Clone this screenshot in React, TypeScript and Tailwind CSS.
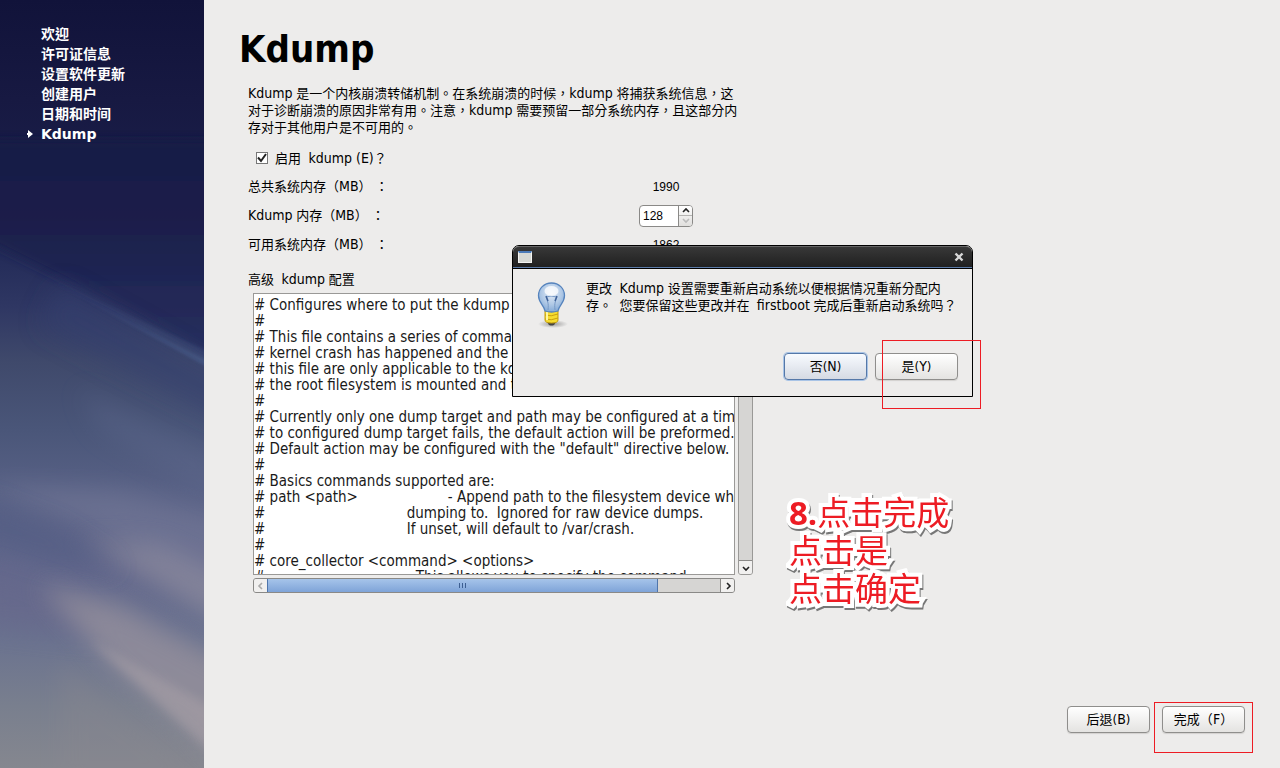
import { useState, type ReactNode } from "react";

const STEPS = ["欢迎", "许可证信息", "设置软件更新", "创建用户", "日期和时间", "Kdump"];

const CONFIG = `# Configures where to put the kdump /proc/vmcore files
#
# This file contains a series of commands to perform (in order) when a
# kernel crash has happened and the kdump kernel has been loaded.
# this file are only applicable to the kdump initramfs, and have no effect
# the root filesystem is mounted and the normal init scripts are processed
#
# Currently only one dump target and path may be configured at a time. If
# to configured dump target fails, the default action will be preformed.
# Default action may be configured with the "default" directive below.
#
# Basics commands supported are:
# path <path>                     - Append path to the filesystem device which you are
#                                 dumping to.  Ignored for raw device dumps.
#                                 If unset, will default to /var/crash.
#
# core_collector <command> <options>
#                                 - This allows you to specify the command`;

// latin runs are set one size above the chinese text
function Latin({ children }: { children: ReactNode }) {
  return <span className="text-[14px]">{children}</span>;
}

function PushButton({ children, focused }: { children: ReactNode; focused?: boolean }) {
  return (
    <button
      type="button"
      className={
        focused
          ? "h-[27px] w-[83px] rounded-[4px] border border-[#5578a8] bg-gradient-to-b from-[#f8fbff] to-[#d5dae3] shadow-[0_0_0_1px_#a9c4e6]"
          : "h-[27px] w-[83px] rounded-[4px] border border-[#8f8e8c] bg-gradient-to-b from-white to-[#e4e3e1] shadow-[0_1px_1px_#d2d1cf]"
      }
    >
      {children}
    </button>
  );
}

function Chevron({ d, stroke = "#222" }: { d: string; stroke?: string }) {
  return (
    <svg viewBox="0 0 10 10" className="h-[10px] w-[10px]" fill="none" stroke={stroke} strokeWidth="1.600">
      <path d={d} />
    </svg>
  );
}

function Sky() {
  return (
    <svg className="absolute inset-0 h-full w-full" viewBox="0 0 204 768" preserveAspectRatio="none">
      <defs>
        <linearGradient id="sky" x1="0" y1="0" x2="0" y2="1">
          <stop offset="0" stopColor="#11133a" />
          <stop offset="0.13" stopColor="#171942" />
          <stop offset="0.27" stopColor="#1b204c" />
          <stop offset="0.33" stopColor="#232b58" />
          <stop offset="0.4" stopColor="#2f3763" />
          <stop offset="0.47" stopColor="#3f496b" />
          <stop offset="0.56" stopColor="#4a5679" />
          <stop offset="0.64" stopColor="#586185" />
          <stop offset="0.74" stopColor="#63688c" />
          <stop offset="0.83" stopColor="#6a728f" />
          <stop offset="0.92" stopColor="#797f8e" />
          <stop offset="1" stopColor="#85878f" />
        </linearGradient>
        <linearGradient id="night" x1="0" y1="0" x2="0" y2="1">
          <stop offset="0" stopColor="#181a45" />
          <stop offset="0.4" stopColor="#1b1f4b" />
          <stop offset="1" stopColor="#262e60" />
        </linearGradient>
        <linearGradient id="trail" x1="0" y1="0" x2="1" y2="0">
          <stop offset="0" stopColor="#43588a" stopOpacity="0" />
          <stop offset="1" stopColor="#4c6290" stopOpacity="0.8" />
        </linearGradient>
        <filter id="soft" x="-50%" y="-50%" width="200%" height="200%">
          <feGaussianBlur stdDeviation="12" />
        </filter>
        <filter id="mid" x="-30%" y="-30%" width="160%" height="160%">
          <feGaussianBlur stdDeviation="5" />
        </filter>
        <filter id="thin" x="-20%" y="-20%" width="140%" height="140%">
          <feGaussianBlur stdDeviation="1.500" />
        </filter>
      </defs>
      <rect width="204" height="768" fill="url(#sky)" />
      <path d="M-20 140H230V370L120 308L-20 238z" fill="url(#night)" opacity="0.85" filter="url(#mid)" />
      <path d="M60 285L230 378V425L40 325z" fill="#34406e" opacity="0.6" filter="url(#soft)" />
      <path d="M30 270L210 352V369z" fill="url(#trail)" opacity="0.3" filter="url(#thin)" />
      <path d="M70 292L210 362V368z" fill="url(#trail)" opacity="0.55" filter="url(#thin)" />
      <path d="M80 390L220 458V500L100 430z" fill="#626c90" opacity="0.35" filter="url(#soft)" />
      <path d="M-20 485L100 530L240 620V520L120 490z" fill="#7d809c" opacity="0.45" filter="url(#soft)" />
      <path d="M80 540L230 628V580L160 545z" fill="#918e9f" opacity="0.6" filter="url(#soft)" />
      <path d="M-20 500L60 530L120 570L60 565L-20 540z" fill="#515c83" opacity="0.6" filter="url(#soft)" />
      <path d="M-20 565L60 590L110 640L-20 625z" fill="#66658a" opacity="0.4" filter="url(#soft)" />
      <path d="M40 585L120 605L240 670V775L110 665z" fill="#97919d" opacity="0.75" filter="url(#soft)" />
      <path d="M90 640L225 715V765z" fill="#aea5aa" opacity="0.45" filter="url(#mid)" />
      <path d="M60 660L200 765V790H60z" fill="#8a888f" opacity="0.35" filter="url(#soft)" />
    </svg>
  );
}

function Bulb() {
  return (
    <svg viewBox="0 0 32 46" className="h-[46px] w-8">
      <defs>
        <radialGradient id="glass" cx="0.5" cy="0.35" r="0.65">
          <stop offset="0" stopColor="#e2ebf6" />
          <stop offset="0.6" stopColor="#b0c9e6" />
          <stop offset="1" stopColor="#83a9d6" />
        </radialGradient>
        <radialGradient id="shade">
          <stop offset="0" stopColor="#777" stopOpacity="0.7" />
          <stop offset="1" stopColor="#777" stopOpacity="0" />
        </radialGradient>
      </defs>
      <ellipse cx="17" cy="42" rx="15" ry="4" fill="url(#shade)" />
      <path d="M11 40H20L18 43Q15.500 44 13 43z" fill="#444" />
      <path d="M9 29H22V38Q22 41 15.500 41Q9 41 9 38z" fill="#f6dc2f" stroke="#c39b0c" />
      <path d="M9 33Q15 35 22 32M9 37Q15 39 22 36" stroke="#c8a010" fill="none" />
      <path d="M11 30V38" stroke="#fff7a0" strokeWidth="2" />
      <path
        d="M15.500 1C8 1 2.500 6.500 2.500 13.500C2.500 21 8 23 9 29Q15.500 31 22 29C23 23 28.500 21 28.500 13.500C28.500 6.500 23 1 15.500 1z"
        fill="url(#glass)"
        stroke="#5583bd"
        strokeWidth="1.300"
      />
      <path d="M12 28C13 21 11 18 10 15L15 14L21 15C20 18 18 21 19 28" fill="none" stroke="#7699c6" />
      <path d="M10 14L12 19M21 14L19 19" stroke="#3f6198" strokeWidth="1.500" />
      <ellipse cx="15.500" cy="9" rx="7" ry="5" fill="#fff" opacity="0.75" />
    </svg>
  );
}

function Dialog() {
  return (
    <div
      role="dialog"
      aria-label="Kdump"
      className="absolute top-[245px] left-[512px] w-[461px] rounded-t-[7px] border border-black bg-[#edeceb]"
    >
      <div className="flex h-[22px] items-center justify-between rounded-t-[6px] border-t border-b border-t-[#666] border-b-[#5b7ba8] bg-gradient-to-b from-[#383838] to-[#202020] pr-2 pl-[5px]">
        <span className="h-3 w-[14px] border border-[#f4f4f2] border-t-2 border-t-[#4a7ab8] bg-[#d6d8d4]" />
        <button type="button" aria-label="关闭" className="flex h-4 w-[10px] items-center">
          <svg viewBox="0 0 10 10" className="h-[10px] w-[10px]" stroke="#d8d8d8" strokeWidth="2.400">
            <path d="M1.500 1.500L8.500 8.500M8.500 1.500L1.500 8.500" />
          </svg>
        </button>
      </div>
      <div className="border-t border-black pt-[11px] pr-[14px] pb-4 pl-[23px]">
        <div className="flex items-start gap-[18px]">
          <div className="pt-[2px]">
            <Bulb />
          </div>
          <p className="leading-[17px] whitespace-nowrap">
            更改&nbsp; <Latin>Kdump</Latin> 设置需要重新启动系统以便根据情况重新分配内
            <br />
            存。&nbsp; 您要保留这些更改并在&nbsp; <Latin>firstboot</Latin> 完成后重新启动系统吗？
          </p>
        </div>
        <div className="mt-[25px] flex justify-end gap-2">
          <PushButton focused>
            否(<Latin>N</Latin>)
          </PushButton>
          <PushButton>
            是(<Latin>Y</Latin>)
          </PushButton>
        </div>
      </div>
    </div>
  );
}

export default function App() {
  const [enabled, setEnabled] = useState(true);
  const [memory, setMemory] = useState(128);
  const [config, setConfig] = useState(CONFIG);

  return (
    <div className="relative flex min-h-screen bg-[#edeceb] font-['DejaVu_Sans_Condensed','DejaVu_Sans','Noto_Sans_CJK_TC',sans-serif] text-[13px] text-black [font-stretch:condensed]">
      <aside className="relative w-[204px] shrink-0 overflow-hidden bg-[#171942]">
        <Sky />
        <ol className="relative pt-6 pl-[27px] font-['DejaVu_Sans','Noto_Sans_CJK_TC',sans-serif] text-[14px] leading-5 font-bold text-white [font-stretch:normal]">
          {STEPS.map((step) => (
            <li key={step} className="flex h-5 items-center">
              <span className="w-[14px]">
                {step === "Kdump" && (
                  <svg viewBox="0 0 6 8" className="h-2 w-[6px]" fill="#fff">
                    <path d="M1 0L6 4L1 8V5H0V3H1z" />
                  </svg>
                )}
              </span>
              {step}
            </li>
          ))}
        </ol>
      </aside>

      <main className="flex grow flex-col px-[35px] pt-[29px] pb-[35px]">
        <h1 className="text-[38px] leading-10 font-bold">Kdump</h1>

        <div className="ml-[9px] w-[505px]">
          <p className="mt-4 w-[492px] leading-[17px]">
            <Latin>Kdump</Latin> 是一个内核崩溃转储机制。在系统崩溃的时候，<Latin>kdump</Latin> 将捕获系统信息，这对于诊断崩溃的原因非常有用。注意，<Latin>kdump</Latin> 需要预留一部分系统内存，且这部分内存对于其他用户是不可用的。
          </p>

          <label className="mt-3 flex h-5 items-center gap-[7px] pl-2">
            <input
              type="checkbox"
              checked={enabled}
              onChange={(e) => setEnabled(e.target.checked)}
              className="peer sr-only"
            />
            <span className="flex h-3 w-3 items-center justify-center border border-[#777] bg-white text-white peer-checked:text-[#222]">
              <svg viewBox="0 0 10 10" className="h-[10px] w-[10px]" fill="none" stroke="currentColor" strokeWidth="2">
                <path d="M1 4.500L4 8L9 1" />
              </svg>
            </span>
            <span>
              启用&nbsp; <Latin>kdump (E)</Latin>？
            </span>
          </label>

          <div className="mt-1">
            <div className="flex h-[29px] items-center">
              <span className="w-[338px]">
                总共系统内存（<Latin>MB</Latin>）&nbsp;：
              </span>
              <span className="w-40 text-center font-['Liberation_Sans',sans-serif] text-[12px]">1990</span>
            </div>
            <div className="flex h-[29px] items-center">
              <label htmlFor="memory" className="w-[338px]">
                <Latin>Kdump</Latin> 内存（<Latin>MB</Latin>）&nbsp;：
              </label>
              <div className="flex w-40 justify-center">
                <div className="flex h-[22px] w-[54px] overflow-hidden rounded-[4px] border border-[#8a8987] bg-white">
                  <input
                    id="memory"
                    inputMode="numeric"
                    value={memory}
                    onChange={(e) => setMemory(Number(e.target.value) || 0)}
                    className="w-[38px] pl-[3px] font-['Liberation_Sans',sans-serif] text-[12px] outline-none"
                  />
                  <div className="flex grow flex-col border-l border-[#8a8987] bg-gradient-to-b from-white to-[#e0dfdd]">
                    <button
                      type="button"
                      aria-label="增加"
                      onClick={() => setMemory(memory + 1)}
                      className="flex h-[10px] items-center justify-center border-b border-[#b5b4b2]"
                    >
                      <Chevron d="M2 7L5 4L8 7" />
                    </button>
                    <button
                      type="button"
                      aria-label="减少"
                      onClick={() => setMemory(memory - 1)}
                      className="flex h-[10px] items-center justify-center"
                    >
                      <Chevron d="M2 3L5 6L8 3" stroke="#bbb" />
                    </button>
                  </div>
                </div>
              </div>
            </div>
            <div className="flex h-[29px] items-center">
              <span className="w-[338px]">
                可用系统内存（<Latin>MB</Latin>）&nbsp;：
              </span>
              <span className="w-40 text-center font-['Liberation_Sans',sans-serif] text-[12px]">1862</span>
            </div>
          </div>

          <label htmlFor="config" className="mt-[10px] block h-5 leading-5">
            高级&nbsp; <Latin>kdump</Latin> 配置
          </label>

          <div className="mt-1 ml-[5px] grid w-[500px] grid-cols-[482px_15px] gap-[3px]">
            <textarea
              id="config"
              value={config}
              onChange={(e) => setConfig(e.target.value)}
              spellCheck={false}
              wrap="off"
              className="block h-[282px] w-full resize-none overflow-hidden border border-[#9a9997] bg-white pt-[3px] text-[15px] leading-4 whitespace-pre text-[#1a1a1a] outline-none"
            />
            <div className="flex flex-col justify-between overflow-hidden rounded-[3px] border border-[#9a9997] bg-[#d6d5d3]">
              <button type="button" aria-label="向上滚动" className="flex h-[14px] items-center justify-center border-b border-[#8a8987] bg-[#f1f0ef]">
                <Chevron d="M2 7L5 4L8 7" />
              </button>
              <button type="button" aria-label="向下滚动" className="flex h-[14px] items-center justify-center border-t border-[#8a8987] bg-[#f1f0ef]">
                <Chevron d="M2 4L5 7L8 4" />
              </button>
            </div>
            <div className="flex h-[15px] overflow-hidden rounded-[3px] border border-[#8a8987] bg-[#d6d5d3]">
              <button type="button" aria-label="向左滚动" className="flex w-[13px] items-center justify-center bg-[#f1f0ef]">
                <Chevron d="M6 2L3 5L6 8" stroke="#aaa" />
              </button>
              <div className="flex w-[391px] items-center justify-center gap-[2px] border-x border-[#4f75ab] bg-gradient-to-b from-[#a6c4ea] to-[#7fa4d8]">
                <span className="h-[5px] w-px bg-[#3d5f92]" />
                <span className="h-[5px] w-px bg-[#3d5f92]" />
                <span className="h-[5px] w-px bg-[#3d5f92]" />
              </div>
              <button type="button" aria-label="向右滚动" className="ml-auto flex w-[14px] items-center justify-center border-l border-[#8a8987] bg-[#f1f0ef]">
                <Chevron d="M4 2L7 5L4 8" />
              </button>
            </div>
          </div>
        </div>

        <div className="mt-auto flex justify-end gap-3">
          <PushButton>
            后退(<Latin>B</Latin>)
          </PushButton>
          <PushButton>
            完成（<Latin>F</Latin>）
          </PushButton>
        </div>
      </main>

      <Dialog />

      <div className="pointer-events-none absolute top-[340px] left-[882px] h-[69px] w-[99px] border border-[#ed1c24]" />
      <div className="pointer-events-none absolute right-[27px] bottom-[15px] h-[51px] w-[99px] border border-[#ed1c24]" />

      <p className="pointer-events-none absolute top-[492px] left-[789px] font-['Noto_Sans_CJK_SC',sans-serif] text-[33px] leading-[38px] whitespace-nowrap text-[#ed1c24] drop-shadow-[1px_2px_0px_#777] [-webkit-text-stroke:8px_white] [paint-order:stroke_fill] [stroke-linejoin:round]">
        <span className="font-['Open_Sans',sans-serif] leading-none font-bold [font-stretch:normal]">8.</span>点击完成
        <br />
        点击是
        <br />
        点击确定
      </p>
    </div>
  );
}
